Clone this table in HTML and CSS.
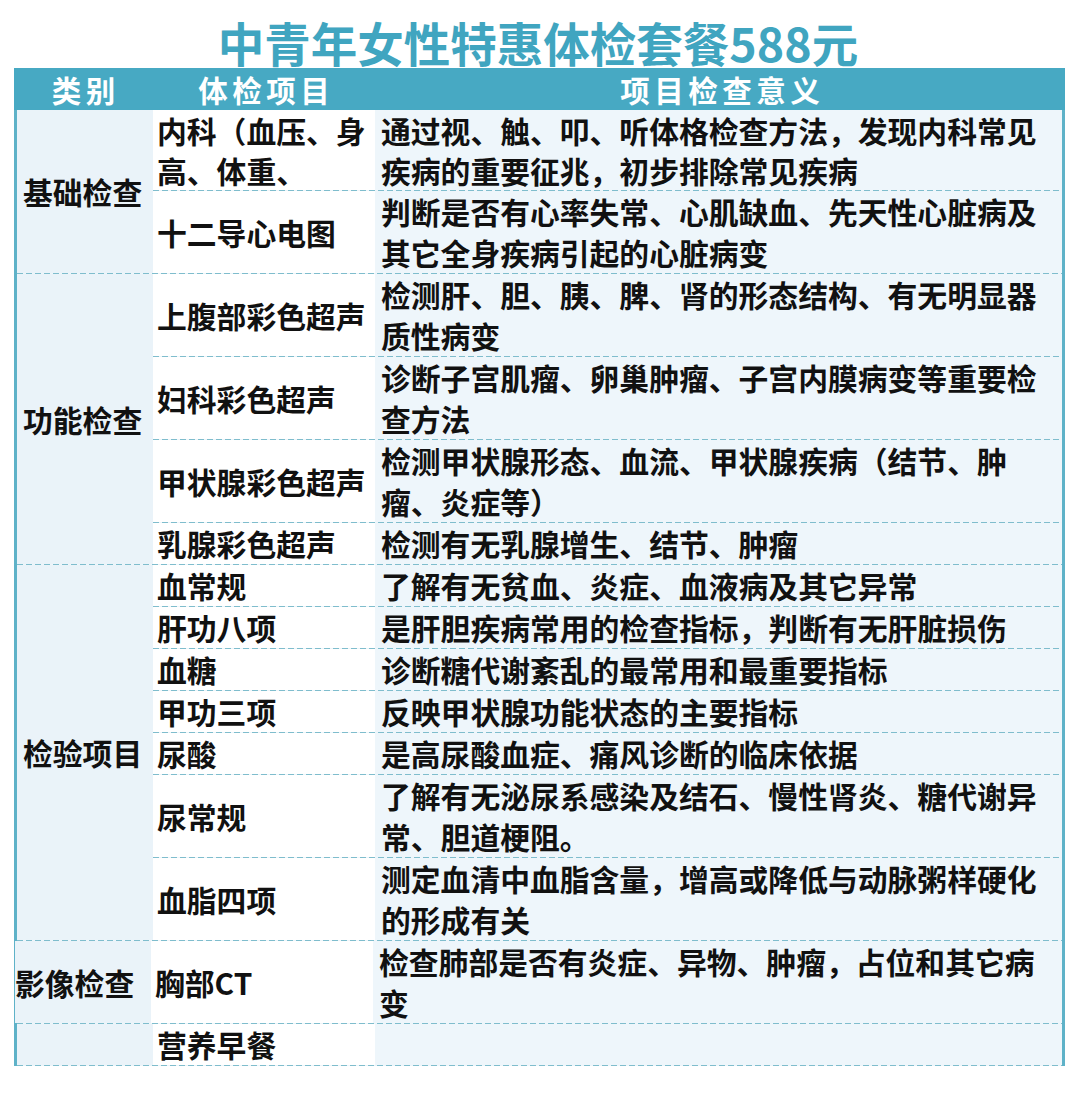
FILE: index.html
```html
<!DOCTYPE html>
<html lang="zh-CN">
<head>
<meta charset="utf-8">
<title>中青年女性特惠体检套餐588元</title>
<link rel="stylesheet" href="styles.css">
</head>
<body>
<h1 class="title">中青年女性特惠体检套餐588元</h1>
<div class="table">
  <div class="head">
    <div class="h c1">类别</div>
    <div class="h c2">体检项目</div>
    <div class="h c3">项目检查意义</div>
  </div>

  <div class="group">
    <div class="cat">基础检查</div>
    <div class="rows">
      <div class="row row-first"><div class="item">内科（血压、身<br>高、体重、</div><div class="desc">通过视、触、叩、听体格检查方法，发现内科常见<br>疾病的重要征兆，初步排除常见疾病</div></div>
      <div class="row"><div class="item">十二导心电图</div><div class="desc">判断是否有心率失常、心肌缺血、先天性心脏病及<br>其它全身疾病引起的心脏病变</div></div>
    </div>
  </div>

  <div class="group">
    <div class="cat">功能检查</div>
    <div class="rows">
      <div class="row"><div class="item">上腹部彩色超声</div><div class="desc">检测肝、胆、胰、脾、肾的形态结构、有无明显器<br>质性病变</div></div>
      <div class="row"><div class="item">妇科彩色超声</div><div class="desc">诊断子宫肌瘤、卵巢肿瘤、子宫内膜病变等重要检<br>查方法</div></div>
      <div class="row"><div class="item">甲状腺彩色超声</div><div class="desc">检测甲状腺形态、血流、甲状腺疾病（结节、肿<br>瘤、炎症等）</div></div>
      <div class="row"><div class="item">乳腺彩色超声</div><div class="desc">检测有无乳腺增生、结节、肿瘤</div></div>
    </div>
  </div>

  <div class="group">
    <div class="cat">检验项目</div>
    <div class="rows">
      <div class="row"><div class="item">血常规</div><div class="desc">了解有无贫血、炎症、血液病及其它异常</div></div>
      <div class="row"><div class="item">肝功八项</div><div class="desc">是肝胆疾病常用的检查指标，判断有无肝脏损伤</div></div>
      <div class="row"><div class="item">血糖</div><div class="desc">诊断糖代谢紊乱的最常用和最重要指标</div></div>
      <div class="row"><div class="item">甲功三项</div><div class="desc">反映甲状腺功能状态的主要指标</div></div>
      <div class="row"><div class="item">尿酸</div><div class="desc">是高尿酸血症、痛风诊断的临床依据</div></div>
      <div class="row"><div class="item">尿常规</div><div class="desc">了解有无泌尿系感染及结石、慢性肾炎、糖代谢异<br>常、胆道梗阻。</div></div>
      <div class="row"><div class="item">血脂四项</div><div class="desc">测定血清中血脂含量，增高或降低与动脉粥样硬化<br>的形成有关</div></div>
    </div>
  </div>

  <div class="group">
    <div class="cat cat-tight">影像检查</div>
    <div class="rows">
      <div class="row"><div class="item">胸部CT</div><div class="desc">检查肺部是否有炎症、异物、肿瘤，占位和其它病<br>变</div></div>
    </div>
  </div>

  <div class="group">
    <div class="cat"></div>
    <div class="rows">
      <div class="row"><div class="item">营养早餐</div><div class="desc"></div></div>
    </div>
  </div>
</div>
</body>
</html>
```

FILE: styles.css
```css
* { box-sizing: border-box; }

html, body {
  margin: 0;
  padding: 0;
  background: #ffffff;
}

body {
  font-family: "Noto Sans CJK SC", "Noto Sans", sans-serif;
  color: #111111;
}

.title {
  margin: 0;
  height: 68px;
  padding-top: 19px;
  line-height: 46px;
  font-size: 46.5px;
  font-weight: 700;
  color: #40a5c0;
  text-align: center;
  padding-right: 4px;
  white-space: nowrap;
}

.table {
  margin-left: 14px;
  width: 1051px;
  border-left: 3px solid #5eb2c8;
  border-right: 3px solid #5eb2c8;
}

.head {
  display: flex;
  height: 42px;
  margin: 0 -3px;
  background: #47a9c3;
}

.h {
  color: #ffffff;
  font-size: 29.5px;
  letter-spacing: 4.5px;
  padding-left: 4.5px;
  font-weight: 700;
  line-height: 42px;
  text-align: center;
}

.h.c1 { width: 139px; }
.h.c2 { width: 222px; }
.h.c3 { flex: 1; }

.group {
  display: flex;
  padding-bottom: 1px;
  background:
    repeating-linear-gradient(90deg, #7fbdcd 0 6px, transparent 6px 9px) left bottom / 100% 1px no-repeat,
    #edf5fa;
}

.cat {
  width: 136px;
  flex: none;
  display: flex;
  align-items: center;
  padding-left: 6px;
  font-size: 29.8px;
  font-weight: 700;
  line-height: 41px;
  background: #eaf3f9;
  white-space: nowrap;
}

.cat-tight { padding-left: 0; margin-left: -2px; }

.rows {
  flex: 1;
  display: flex;
  flex-direction: column;
}

.row {
  display: flex;
  padding-bottom: 1px;
  background:
    repeating-linear-gradient(90deg, #7fbdcd 0 6px, transparent 6px 9px) left bottom / 100% 1px no-repeat,
    #edf5fa;
}

.row:last-child {
  padding-bottom: 0;
}

.row-first {
  height: 81px;
}

.row-first .item,
.row-first .desc {
  line-height: 40px;
}

.item {
  width: 222px;
  flex: none;
  display: flex;
  align-items: center;
  min-height: 41px;
  padding-left: 4px;
  font-size: 29.8px;
  font-weight: 700;
  line-height: 41px;
  background: #ffffff;
  white-space: nowrap;
}

.desc {
  flex: 1;
  padding-left: 6px;
  font-size: 29.8px;
  font-weight: 700;
  line-height: 41px;
  min-height: 41px;
  background: #eef6fb;
  white-space: nowrap;
}
```
